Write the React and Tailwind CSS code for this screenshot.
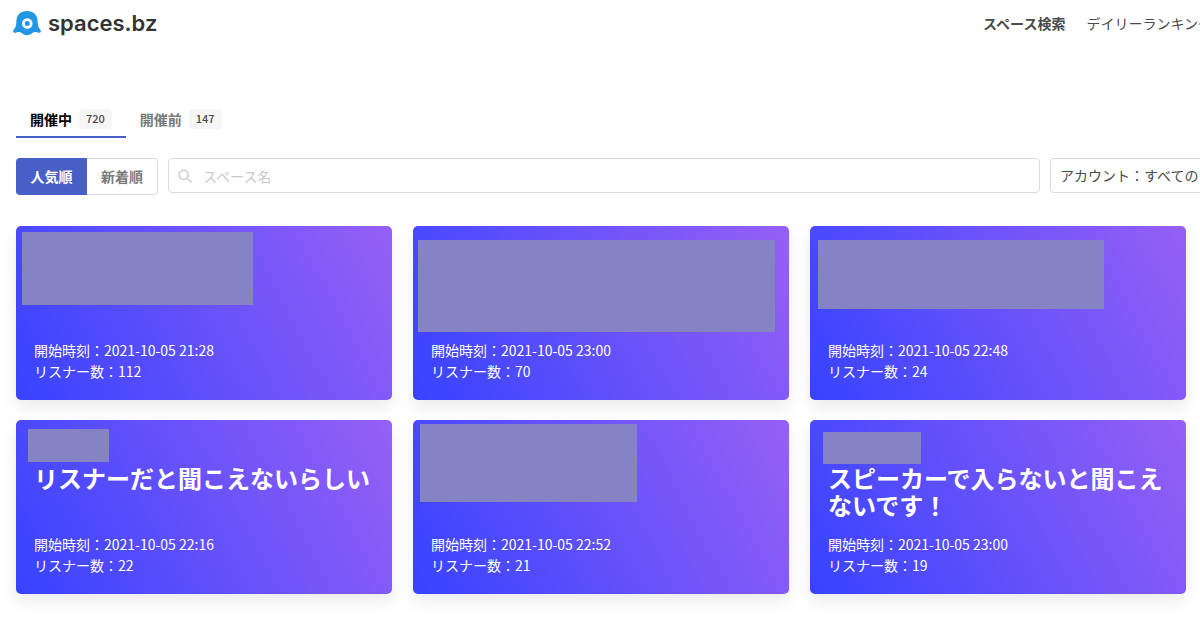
import React from "react";

const SPACES = [
  { title: "", start: "2021-10-05 21:28", listeners: 112, mask: "left-[6px] top-[6px] w-[231px] h-[73px]" },
  { title: "", start: "2021-10-05 23:00", listeners: 70, mask: "left-[5px] top-[14px] w-[357px] h-[92px]" },
  { title: "", start: "2021-10-05 22:48", listeners: 24, mask: "left-[8px] top-[14px] w-[286px] h-[69px]" },
  { title: "リスナーだと聞こえないらしい", start: "2021-10-05 22:16", listeners: 22, mask: "left-[12px] top-[9px] w-[81px] h-[33px]" },
  { title: "", start: "2021-10-05 22:52", listeners: 21, mask: "left-[7px] top-[4px] w-[217px] h-[78px]" },
  { title: "スピーカーで入らないと聞こえないです！", start: "2021-10-05 23:00", listeners: 19, mask: "left-[13px] top-[12px] w-[98px] h-[32px]" },
];

function Logo() {
  return (
    <svg viewBox="0 0 30 26" className="h-[26px] w-[30px]" aria-hidden="true">
      <path
        fill="#2196e3"
        d="M15 1C8.600 1 4.600 5.200 4.400 10.800C4.300 14.600 3.900 17.400 1.900 19.500C0.400 21.200 1.400 22.900 3.200 22.800C4.600 22.700 5.300 21.900 6.900 22C9 22.200 9.500 23.200 11.400 24.300C13.800 25.600 16.200 25.600 18.600 24.300C20.500 23.200 21 22.200 23.100 22C24.700 21.900 25.400 22.700 26.800 22.800C28.600 22.900 29.600 21.200 28.100 19.500C26.100 17.400 25.700 14.600 25.600 10.800C25.400 5.200 21.400 1 15 1Z"
      />
      <circle cx="15.300" cy="13.500" r="3.900" fill="none" stroke="#fff" strokeWidth="2.800" />
    </svg>
  );
}

function Tab({ label, count, active }) {
  return (
    <button
      type="button"
      role="tab"
      aria-selected={active}
      className={
        active
          ? "flex h-[37px] items-center gap-[7px] border-b-2 border-[#485fc7] px-[14px] text-black"
          : "flex h-[37px] items-center gap-[7px] border-b-2 border-transparent px-[14px] text-[#7a7a7a]"
      }
    >
      <span className="text-[14px] font-bold leading-5">{label}</span>
      <span className="flex h-5 items-center rounded bg-[#f5f5f5] px-[7px] text-[11px] font-medium text-[#4a4a4a]">
        {count}
      </span>
    </button>
  );
}

function SpaceCard({ title, start, listeners, mask }) {
  return (
    <a
      href="#space"
      className="relative flex min-h-[174px] flex-col justify-between rounded-[5px] bg-linear-[62deg,#3743ff_0%,#9660f5_100%] px-[18px] pb-[18px] pt-[44px] text-white shadow-[0_8px_16px_rgba(10,10,10,0.08)]"
    >
      <h2 className="text-[24px] font-bold leading-[27px]">{title}</h2>
      <div className="text-[14px] leading-[21px]">
        <p>開始時刻：{start}</p>
        <p>リスナー数：{listeners}</p>
      </div>
      <span className={"absolute bg-[#8683c4] " + mask} />
    </a>
  );
}

export default function App() {
  return (
    <div className="min-h-screen overflow-hidden bg-white pb-10 font-['Noto_Sans_CJK_JP',sans-serif] text-[#4a4a4a]">
      <header className="flex h-[46px] items-center pl-3">
        <a href="#home" className="flex items-center gap-[6px]">
          <Logo />
          <span className="font-['Inter',sans-serif] text-[22px] font-semibold leading-7 text-[#333]">spaces.bz</span>
        </a>
        <nav className="-mr-[12px] ml-auto flex gap-[21px] whitespace-nowrap text-[14px] leading-5">
          <a href="#search" className="font-bold">スペース検索</a>
          <a href="#ranking">デイリーランキング</a>
        </nav>
      </header>

      <main className="pl-4 pr-[14px] pt-[55px]">
        <div role="tablist" className="flex">
          <Tab label="開催中" count={720} active />
          <Tab label="開催前" count={147} active={false} />
        </div>

        <div className="mt-5 flex">
          <div className="flex h-[37px] w-[142px] shrink-0 text-[14px] font-bold">
            <button type="button" className="w-[71px] rounded-l bg-[#485fc7] text-white">人気順</button>
            <button type="button" className="flex-1 rounded-r border border-l-0 border-[#dbdbdb] bg-white text-[#7a7a7a]">新着順</button>
          </div>
          <label className="ml-[10px] flex h-[35px] flex-1 items-center gap-[11px] rounded border border-[#dbdbdb] pl-[9px]">
            <svg viewBox="0 0 512 512" className="h-[14px] w-[14px] fill-[#dbdbdb]" aria-hidden="true">
              <path d="M505 442.7L405.3 343c-4.500-4.500-10.600-7-17-7H372c27.600-35.300 44-79.700 44-128C416 93.100 322.900 0 208 0S0 93.100 0 208s93.100 208 208 208c48.300 0 92.700-16.400 128-44v16.300c0 6.400 2.500 12.500 7 17l99.700 99.700c9.400 9.400 24.600 9.400 33.900 0l28.300-28.300c9.400-9.400 9.400-24.600.1-34zM208 336c-70.700 0-128-57.200-128-128 0-70.700 57.200-128 128-128 70.700 0 128 57.200 128 128 0 70.700-57.200 128-128 128z" />
            </svg>
            <input
              type="text"
              aria-label="スペース名"
              placeholder="スペース名"
              className="min-w-0 flex-1 bg-transparent text-[14px] leading-5 outline-none placeholder:text-[#c8c8c8]"
            />
          </label>
          <select
            aria-label="アカウント"
            className="-mr-[54px] ml-[10px] h-[35px] w-[190px] shrink-0 appearance-none rounded border border-[#dbdbdb] bg-white px-[9px] text-[14px]"
          >
            <option>アカウント：すべての</option>
          </select>
        </div>

        <div className="mt-[31px] grid grid-cols-3 gap-x-[21px] gap-y-5">
          {SPACES.map((space, i) => (
            <SpaceCard key={i} {...space} />
          ))}
        </div>
      </main>
    </div>
  );
}
